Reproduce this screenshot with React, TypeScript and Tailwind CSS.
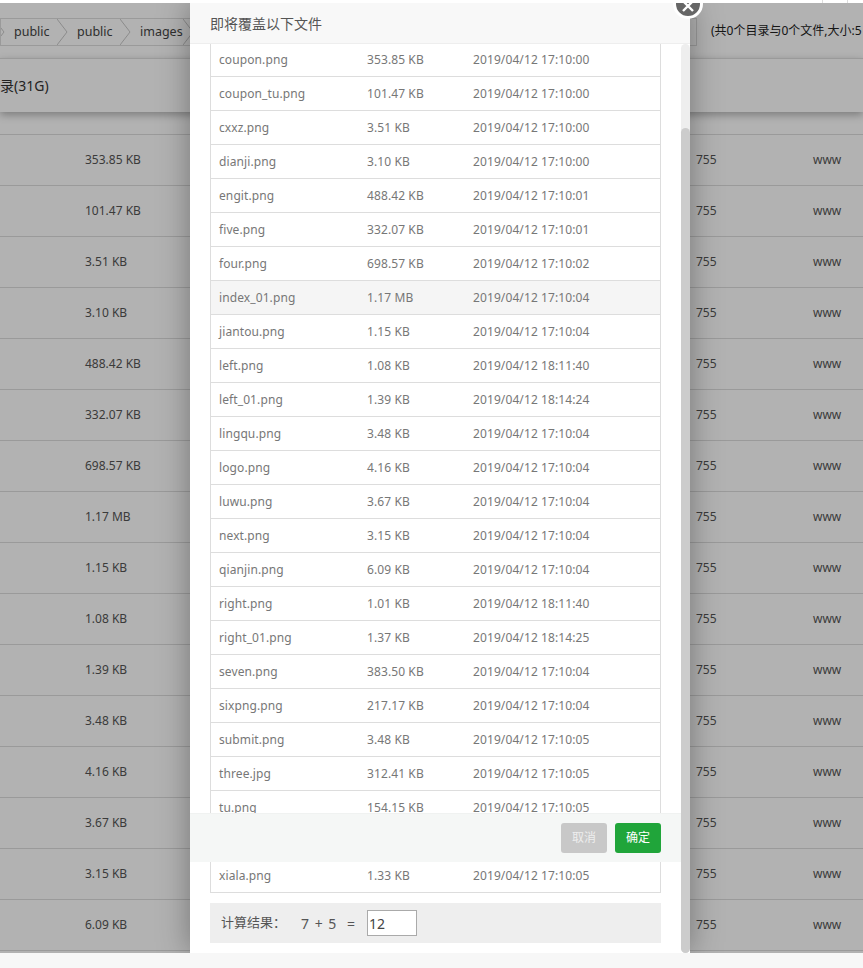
import React from "react";

const files: [string, string, string][] = [
  ["coupon.png", "353.85 KB", "2019/04/12 17:10:00"],
  ["coupon_tu.png", "101.47 KB", "2019/04/12 17:10:00"],
  ["cxxz.png", "3.51 KB", "2019/04/12 17:10:00"],
  ["dianji.png", "3.10 KB", "2019/04/12 17:10:00"],
  ["engit.png", "488.42 KB", "2019/04/12 17:10:01"],
  ["five.png", "332.07 KB", "2019/04/12 17:10:01"],
  ["four.png", "698.57 KB", "2019/04/12 17:10:02"],
  ["index_01.png", "1.17 MB", "2019/04/12 17:10:04"],
  ["jiantou.png", "1.15 KB", "2019/04/12 17:10:04"],
  ["left.png", "1.08 KB", "2019/04/12 18:11:40"],
  ["left_01.png", "1.39 KB", "2019/04/12 18:14:24"],
  ["lingqu.png", "3.48 KB", "2019/04/12 17:10:04"],
  ["logo.png", "4.16 KB", "2019/04/12 17:10:04"],
  ["luwu.png", "3.67 KB", "2019/04/12 17:10:04"],
  ["next.png", "3.15 KB", "2019/04/12 17:10:04"],
  ["qianjin.png", "6.09 KB", "2019/04/12 17:10:04"],
  ["right.png", "1.01 KB", "2019/04/12 18:11:40"],
  ["right_01.png", "1.37 KB", "2019/04/12 18:14:25"],
  ["seven.png", "383.50 KB", "2019/04/12 17:10:04"],
  ["sixpng.png", "217.17 KB", "2019/04/12 17:10:04"],
  ["submit.png", "3.48 KB", "2019/04/12 17:10:05"],
  ["three.jpg", "312.41 KB", "2019/04/12 17:10:05"],
  ["tu.png", "154.15 KB", "2019/04/12 17:10:05"],
  ["two.png", "3.52 KB", "2019/04/12 17:10:05"],
  ["xiala.png", "1.33 KB", "2019/04/12 17:10:05"],
];

const pageSizes = files.slice(0, 16).map((f) => f[1]);
const crumbs = ["public", "public", "images"];

function Chevron({ className = "" }: { className?: string }) {
  return (
    <svg width="12" height="26" viewBox="0 0 12 26" className={`shrink-0 text-[#c8c8c8] ${className}`}>
      <path d="M0 0 L10 13 L0 26" fill="none" stroke="currentColor" strokeWidth="1" />
    </svg>
  );
}

export default function App() {
  return (
    <div className="h-[968px] w-[863px] overflow-hidden flex flex-col bg-white font-['Noto_Sans','Noto_Sans_CJK_SC',sans-serif]">
      <div className="h-[3px] shrink-0 bg-white">
        <div className="ml-[822px] h-full w-[26px] border-x border-[#ddd]" />
      </div>
      <div className="relative h-[950px] shrink-0 overflow-hidden bg-white text-[#333]">
        {/* page beneath the overlay */}
        <div className="flex flex-col">
          <div className="h-[15px]" />
          <div className="flex h-[28px] w-[697px] items-center overflow-hidden border border-[#ddd] text-[12.5px] text-[#444]">
            <Chevron className="-ml-[7px]" />
            {crumbs.map((c, i) => (
              <React.Fragment key={i}>
                <span className="w-[51px] pl-[8px]">{c}</span>
                <Chevron />
              </React.Fragment>
            ))}
          </div>
          <div className="h-[12px]" />
          <div className="relative h-[54px] border-t border-[#ddd] shadow-[0_3px_8px_rgba(0,0,0,0.3)]">
            <div className="flex h-full items-center">
              <span className="text-[14px]">录(31G)</span>
            </div>
            <span className="absolute left-[711px] top-[-37px] whitespace-nowrap text-[12px] text-[#222]">
              (共0个目录与0个文件,大小:5
            </span>
          </div>
          <div className="h-[22px]" />
          <div className="border-t border-[#ddd]">
            {pageSizes.map((s, i) => (
              <div
                key={i}
                className="grid h-[51px] grid-cols-[85px_611px_117px_1fr] items-center border-b border-[#ddd] text-[12px] text-[#555]"
              >
                <span />
                <span>{s}</span>
                <span>755</span>
                <span>www</span>
              </div>
            ))}
          </div>
        </div>

        {/* overlay */}
        <div className="absolute inset-0 bg-black/30" />

        {/* modal */}
        <div className="absolute left-[190px] top-0 flex h-[950px] w-[500px] flex-col bg-white shadow-[0_0_30px_rgba(0,0,0,0.35)]">
          <div className="flex h-[41px] shrink-0 items-center border-b border-[#eee] bg-[#f8f8f8] pl-[20px] text-[14px] text-[#555]">
            即将覆盖以下文件
          </div>
          <div className="relative flex min-h-0 flex-1">
            <div className="min-w-0 flex-1 overflow-hidden px-[20px]">
              <div className="-mt-[1px] border-x border-b border-[#ddd] text-[12px] tracking-[0.1px] text-[#777]">
                {files.map((f) => (
                  <div
                    key={f[0]}
                    className={`grid h-[34px] grid-cols-[148px_106px_1fr] items-center border-b border-[#ddd] pl-[8px] last:h-[33px] last:border-b-0 ${
                      f[0] === "index_01.png" ? "bg-[#f5f5f5]" : ""
                    }`}
                  >
                    <span>{f[0]}</span>
                    <span>{f[1]}</span>
                    <span>{f[2]}</span>
                  </div>
                ))}
              </div>
              <div className="mt-[10px] flex h-[40px] items-center bg-[#eee] pl-[11px] text-[13px] text-[#555]">
                <span className="w-[80px]">计算结果：</span>
                <span className="w-[46px] text-[14px] [word-spacing:2px]">7 + 5</span>
                <span className="w-[20px] text-[14px]">=</span>
                <input
                  readOnly
                  value="12"
                  className="h-[26px] w-[50px] border border-[#aaa] bg-white pl-[1px] text-[14px] text-[#444] outline-none"
                />
              </div>
            </div>
            <div className="w-[9px] shrink-0 rounded-[5px] bg-[#eee]">
              <div className="mt-[84px] h-[825px] rounded-[5px] bg-[#ccc]" />
            </div>
            {/* footer */}
            <div className="absolute left-0 right-[9px] top-[769px] flex h-[49px] items-center justify-end gap-[8px] border-t border-[#f0f2f1] bg-[#f5f7f6] pr-[20px]">
              <button className="h-[30px] w-[46px] rounded-[3px] bg-[#c8c8c8] text-[12px] text-[#eee]">取消</button>
              <button className="h-[30px] w-[46px] rounded-[3px] bg-[#20a53a] text-[12px] text-white">确定</button>
            </div>
          </div>
        </div>

        {/* close */}
        <div className="absolute left-[673px] top-[-14px] flex h-[30px] w-[30px] items-center justify-center rounded-full border-[3px] border-white bg-[#666]">
          <svg width="14" height="14" viewBox="0 0 14 14" className="mt-[3px]">
            <path d="M2 2 L12 12 M12 2 L2 12" stroke="#fff" strokeWidth="2.4" />
          </svg>
        </div>
      </div>
      <div className="flex-1 bg-[#f7f7f7]" />
    </div>
  );
}
